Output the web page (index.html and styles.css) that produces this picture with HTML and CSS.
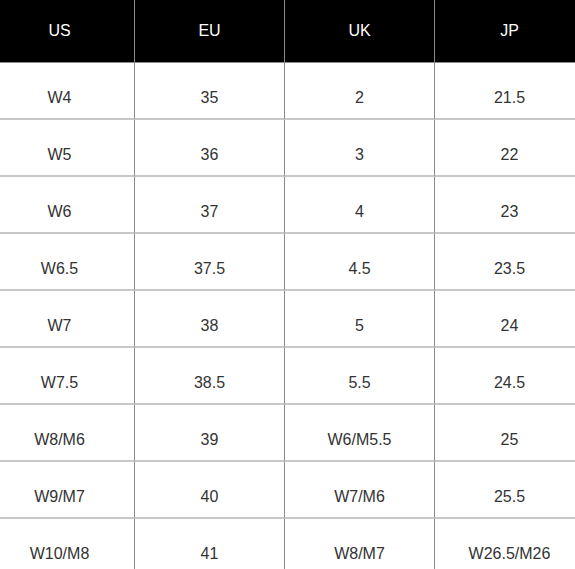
FILE: index.html
```html
<!DOCTYPE html>
<html lang="en">
<head>
<meta charset="utf-8">
<title>Size chart</title>
<link rel="stylesheet" href="styles.css">
</head>
<body>
<div class="wrap">
<table class="sizes">
  <thead>
    <tr><th>US</th><th>EU</th><th>UK</th><th>JP</th></tr>
  </thead>
  <tbody>
    <tr><td>W4</td><td>35</td><td>2</td><td>21.5</td></tr>
    <tr><td>W5</td><td>36</td><td>3</td><td>22</td></tr>
    <tr><td>W6</td><td>37</td><td>4</td><td>23</td></tr>
    <tr><td>W6.5</td><td>37.5</td><td>4.5</td><td>23.5</td></tr>
    <tr><td>W7</td><td>38</td><td>5</td><td>24</td></tr>
    <tr><td>W7.5</td><td>38.5</td><td>5.5</td><td>24.5</td></tr>
    <tr><td>W8/M6</td><td>39</td><td>W6/M5.5</td><td>25</td></tr>
    <tr><td>W9/M7</td><td>40</td><td>W7/M6</td><td>25.5</td></tr>
    <tr><td>W10/M8</td><td>41</td><td>W8/M7</td><td>W26.5/M26</td></tr>
  </tbody>
</table>
</div>
</body>
</html>
```
FILE: styles.css
```css
html, body {
  margin: 0;
  padding: 0;
  background: #fff;
  overflow: hidden;
}
.wrap {
  width: 575px;
  overflow: hidden;
}
.sizes {
  margin-left: -15px;
  width: 600px;
  table-layout: fixed;
  border-collapse: separate;
  border-spacing: 0;
  font-family: "Liberation Sans", Arial, sans-serif;
  font-size: 16px;
  line-height: 20px;
}
.sizes th,
.sizes td {
  width: 150px;
  box-sizing: border-box;
  text-align: center;
  border-right: 1px solid #8a8a8a;
  padding: 0;
}
.sizes th {
  height: 63px;
  background: #000;
  color: #fff;
  font-weight: normal;
  vertical-align: middle;
  border-bottom: 1px solid #8a8a8a;
}
.sizes td {
  height: 57px;
  color: #333;
  padding-top: 14px;
  vertical-align: middle;
  border-bottom: 2px solid #c8c8c8;
}
```
